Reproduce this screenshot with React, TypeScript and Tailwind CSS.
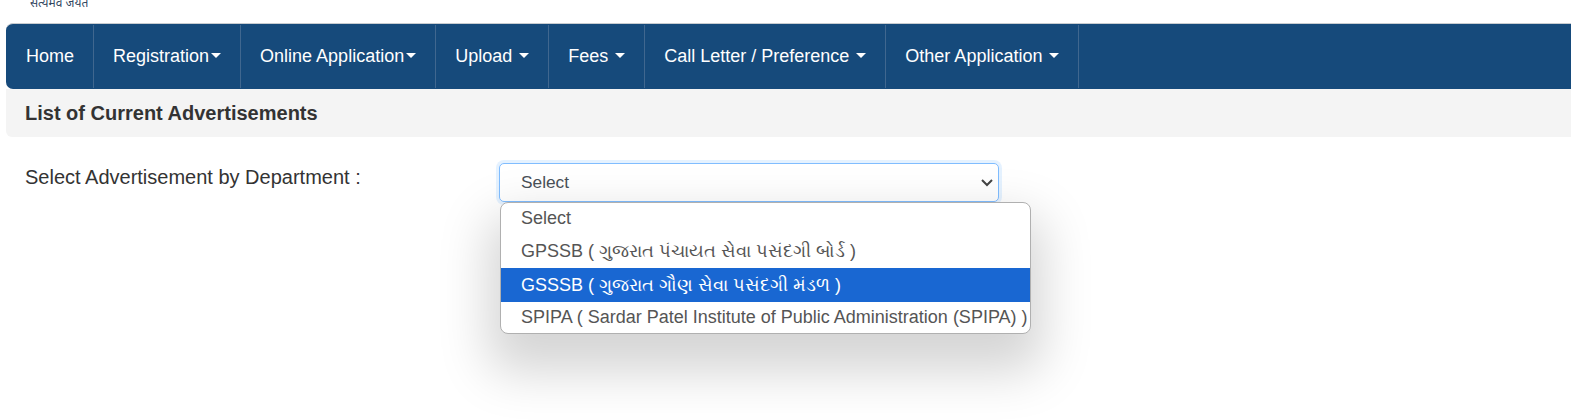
const FONT = "font-['Liberation_Sans','Noto_Sans','DejaVu_Sans',sans-serif]";

function Caret({ gap }: { gap: string }) {
  return (
    <span
      className={`inline-block w-0 h-0 align-middle border-t-[5px] border-x-[5px] border-t-white border-x-transparent ${gap}`}
    />
  );
}

const items = [
  { label: "Home", caret: false, gap: "", pl: "pl-[20px]" },
  { label: "Registration", caret: true, gap: "ml-[2px]", pl: "pl-[19px]" },
  { label: "Online Application", caret: true, gap: "ml-[2px]", pl: "pl-[19px]" },
  { label: "Upload", caret: true, gap: "ml-[7px]", pl: "pl-[19px]" },
  { label: "Fees", caret: true, gap: "ml-[7px]", pl: "pl-[19px]" },
  { label: "Call Letter / Preference", caret: true, gap: "ml-[7px]", pl: "pl-[19px]" },
  { label: "Other Application", caret: true, gap: "ml-[7px]", pl: "pl-[19px]" },
];

const options = [
  { label: "Select", h: "h-[31px]", active: false },
  { label: "GPSSB ( ગુજરાત પંચાયત સેવા પસંદગી બોર્ડ )", h: "h-[34px]", active: false },
  { label: "GSSSB ( ગુજરાત ગૌણ સેવા પસંદગી મંડળ )", h: "h-[34px] pt-[1px]", active: true },
  { label: "SPIPA ( Sardar Patel Institute of Public Administration (SPIPA) )", h: "h-[32px] pb-[2px]", active: false },
];

export default function App() {
  return (
    <div className={`${FONT} bg-white h-[420px] overflow-hidden text-[#333]`}>
      <div className="h-[23px] overflow-hidden pl-[30px]">
        <div className="-mt-[4px] text-[12px] leading-[14px] text-[#33475f] font-['Noto_Sans','DejaVu_Sans',sans-serif]">
          सत्यमेव जयते
        </div>
      </div>

      <div className="pl-[6px]">
        <nav className="flex h-[66px] bg-[#164a7b] border-t border-t-[#c8ccd0] rounded-tl-[7px] rounded-bl-[7px]">
          {items.map((it) => (
            <a
              key={it.label}
              className={`flex items-center my-[1px] pb-[2px] ${it.pl} pr-[19px] border-r border-r-[#40678f] text-white text-[18px] leading-none whitespace-nowrap`}
            >
              {it.label}
              {it.caret && <Caret gap={it.gap} />}
            </a>
          ))}
        </nav>

        <div className="h-[48px] flex items-center pl-[19px] bg-[#f4f4f4] rounded-bl-[6px] font-bold text-[20px] text-[#333]">
          List of Current Advertisements
        </div>

        <div className="flex items-start pt-[26px] pl-[19px]">
          <label className="w-[474px] text-[20px] leading-[28px] text-[#333] shrink-0">
            Select Advertisement by Department :
          </label>

          <div className="relative w-[500px] h-[39px]">
            <select className="w-full h-full appearance-none rounded-[5px] border border-[#80bdff] bg-white pl-[21px] text-[17.3px] text-[#495057] outline-none shadow-[0_0_0_3px_rgba(0,123,255,0.1)]">
              <option>Select</option>
            </select>
            <svg
              className="absolute right-[5px] top-[15px] pointer-events-none"
              width="14"
              height="10"
              viewBox="0 0 14 10"
              fill="none"
            >
              <path d="M2 2l5 5 5-5" stroke="#444" strokeWidth="2" />
            </svg>

            <div className="absolute left-[1px] top-[39px] w-[531px] h-[132px] overflow-hidden bg-white rounded-[8px] border border-[#b0b0b0] shadow-[0_26px_50px_12px_rgba(0,0,0,0.17)] flex flex-col">
              {options.map((o) => (
                <div
                  key={o.label}
                  className={`${o.h} shrink-0 flex items-center pl-[20px] text-[18px] whitespace-nowrap ${
                    o.active ? "bg-[#1967d2] text-white" : "text-[#555]"
                  }`}
                >
                  {o.label}
                </div>
              ))}
            </div>
          </div>
        </div>
      </div>
    </div>
  );
}
